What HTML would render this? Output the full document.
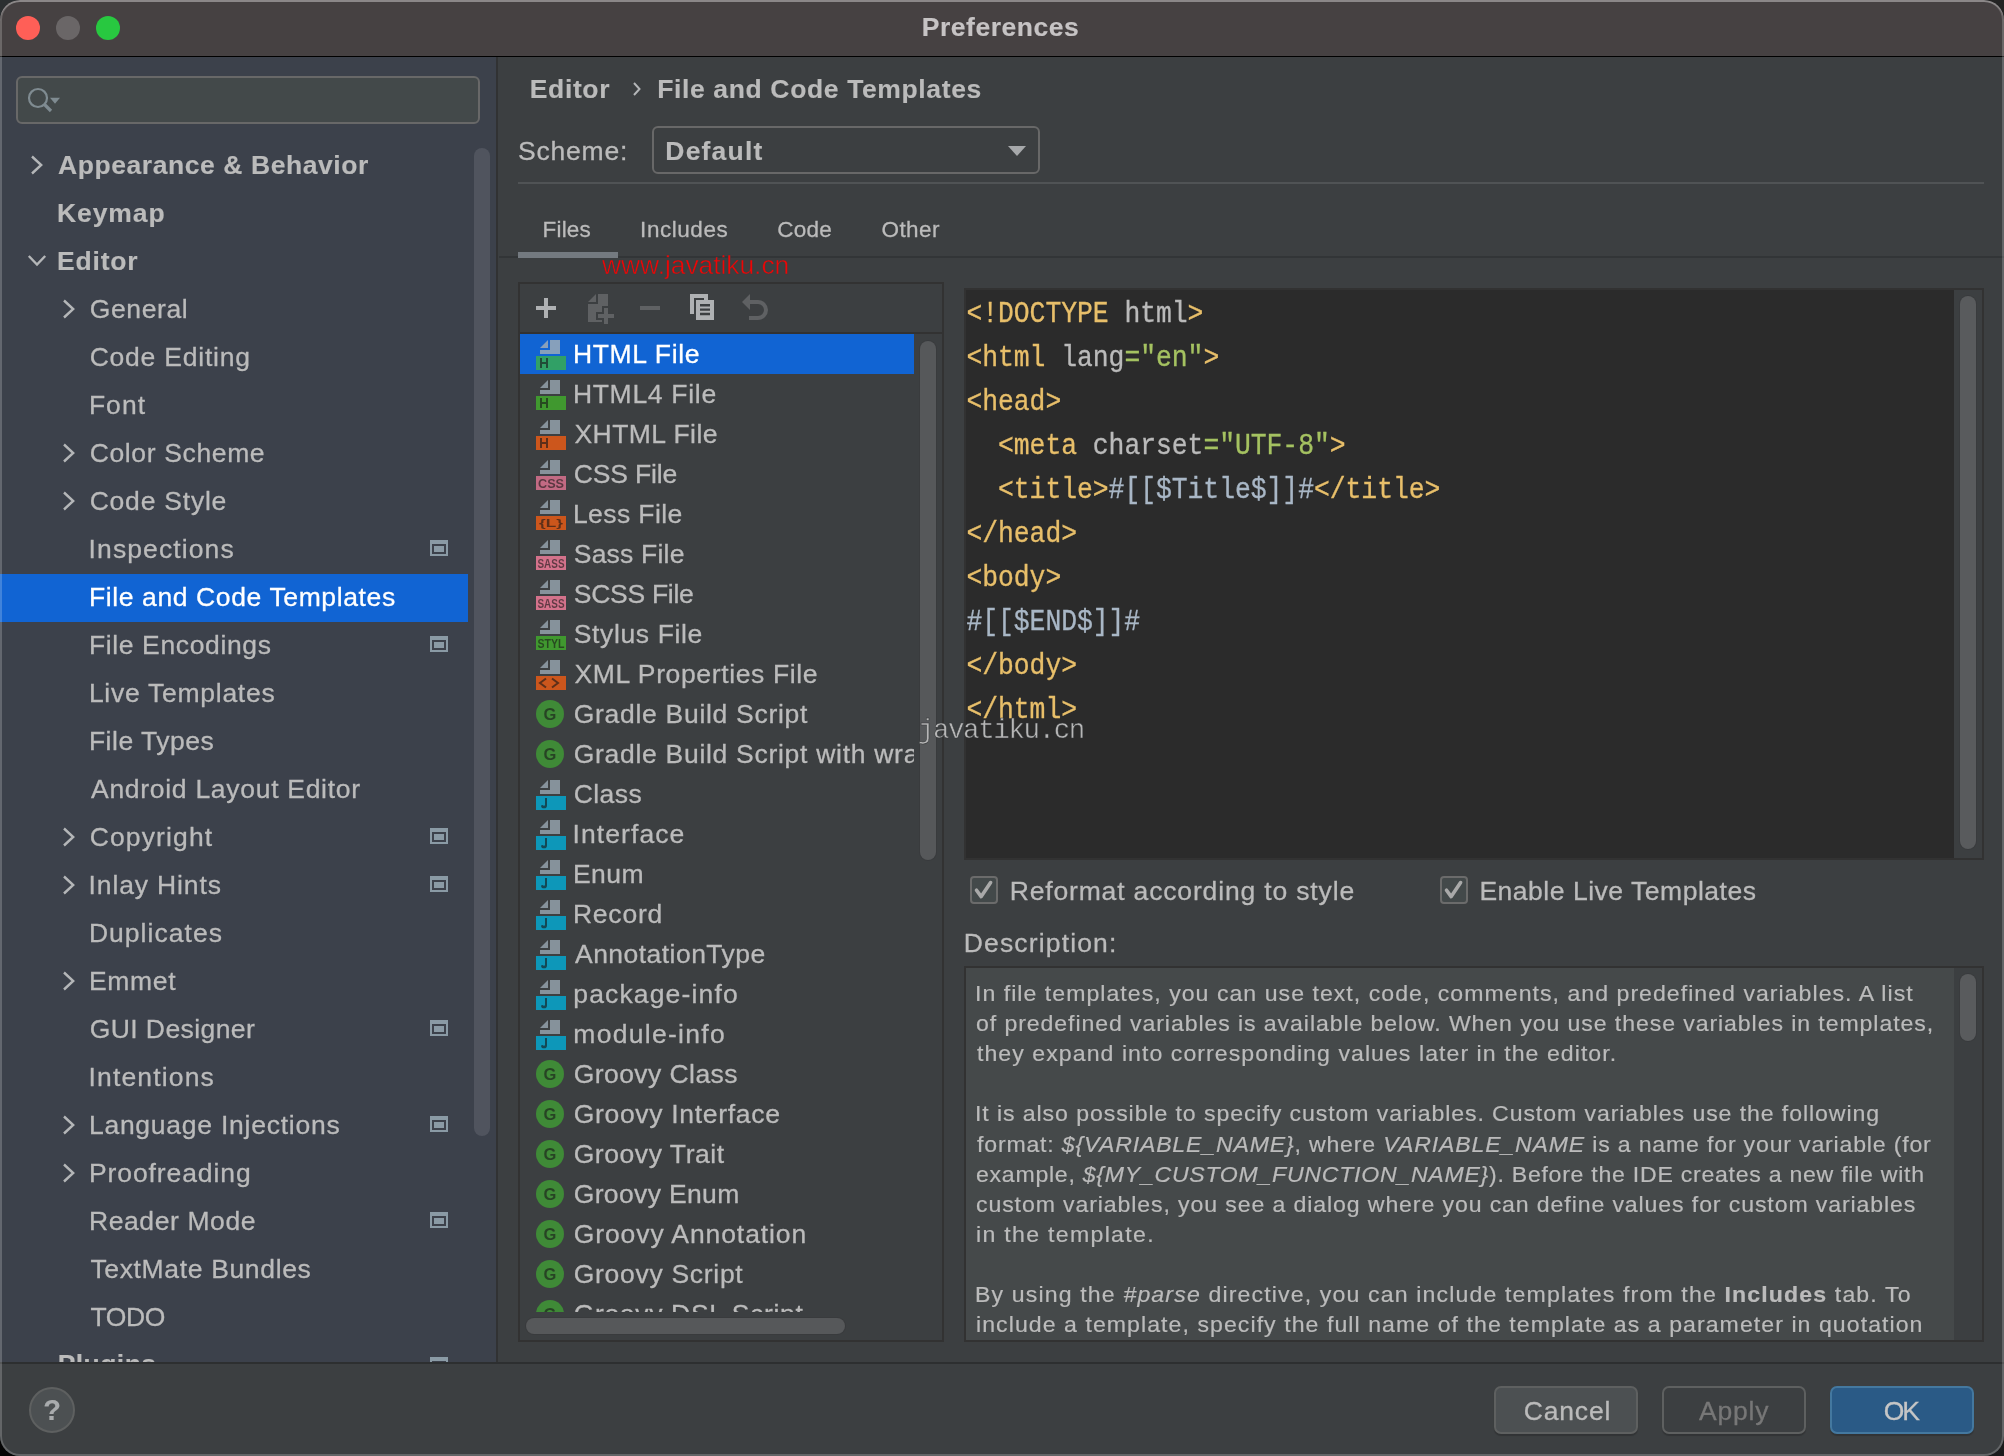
<!DOCTYPE html>
<html lang="en"><head><meta charset="utf-8"><title>Preferences</title>
<style>
html,body{margin:0;padding:0;background:#1b1b1c;width:2004px;height:1456px;overflow:hidden}
body{font-family:"Liberation Sans",sans-serif;}
#win{will-change:transform;position:absolute;left:0;top:0;width:2004px;height:1456px;border-radius:20px;overflow:hidden;background:#3c3f41}
#win:after{content:"";position:absolute;left:0;top:0;right:0;bottom:0;border-radius:20px;box-shadow:inset 0 0 0 2px rgba(255,255,255,.20), inset 0 2px 0 0 rgba(255,255,255,.22);pointer-events:none}
.r{position:absolute;display:block}
.t{position:absolute;white-space:nowrap;-webkit-text-stroke:0.3px currentColor}
</style></head>
<body>
<div class="r" style="left:0px;top:0px;width:30px;height:30px;background:#2b2f31;"></div>
<div class="r" style="left:1974px;top:0px;width:30px;height:30px;background:#232323;"></div>
<div class="r" style="left:0px;top:1426px;width:30px;height:30px;background:#050505;"></div>
<div class="r" style="left:1974px;top:1426px;width:30px;height:30px;background:#1b1b1c;"></div>
<div id="win">
<div class="r" style="left:0px;top:0px;width:2004px;height:56px;background:#464142;"></div>
<div class="r" style="left:0px;top:56px;width:2004px;height:1px;background:#000000;"></div>
<div class="r" style="left:16px;top:16px;width:24px;height:24px;background:#ff5f57;border-radius:50%;"></div>
<div class="r" style="left:56px;top:16px;width:24px;height:24px;background:#6a6667;border-radius:50%;"></div>
<div class="r" style="left:96px;top:16px;width:24px;height:24px;background:#28c840;border-radius:50%;"></div>
<div class="t" style="left:921.80px;top:5.60px;height:42px;line-height:42px;font-size:26.5px;color:#c6c3c4;letter-spacing:0.530px;font-family:'Liberation Sans',sans-serif;font-weight:bold;-webkit-text-stroke:0.15px currentColor;">Preferences</div>
<div class="r" style="left:0px;top:57px;width:496px;height:1306px;background:#3c414b;"></div>
<div class="r" style="left:496px;top:57px;width:2px;height:1306px;background:#313233;"></div>
<div class="r" style="left:16px;top:76px;width:464px;height:48px;box-sizing:border-box;border:2px solid #686868;border-radius:6px;background:#43494a"></div>
<svg class="r" style="left:24px;top:84px" width="44" height="32" viewBox="0 0 44 32"><circle cx="14" cy="14" r="9" fill="none" stroke="#7f8b91" stroke-width="2.2"/><path d="M20.5 20.5 L27 27" stroke="#7f8b91" stroke-width="3.2" fill="none"/><path d="M26 13.8 h10 l-5 6 z" fill="#7f8b91"/></svg>
<div class="r" style="left:474px;top:148px;width:16px;height:988px;background:#50545e;border-radius:8px;"></div>
<div class="t" style="left:58.00px;top:144.00px;height:42px;line-height:42px;font-size:26.5px;color:#bbbbbb;letter-spacing:0.570px;font-family:'Liberation Sans',sans-serif;font-weight:bold;-webkit-text-stroke:0.15px currentColor;">Appearance &amp; Behavior</div>
<svg class="r" style="left:29.5px;top:153px" width="14" height="22" viewBox="0 0 14 22"><path d="M2 3.5 L11.2 12 L2 20.5" fill="none" stroke="#b4b6b8" stroke-width="2.4"/></svg>
<div class="t" style="left:57.00px;top:192.00px;height:42px;line-height:42px;font-size:26.5px;color:#bbbbbb;letter-spacing:0.900px;font-family:'Liberation Sans',sans-serif;font-weight:bold;-webkit-text-stroke:0.15px currentColor;">Keymap</div>
<div class="t" style="left:57.00px;top:240.00px;height:42px;line-height:42px;font-size:26.5px;color:#bbbbbb;letter-spacing:0.820px;font-family:'Liberation Sans',sans-serif;font-weight:bold;-webkit-text-stroke:0.15px currentColor;">Editor</div>
<svg class="r" style="left:26px;top:253.6px" width="22" height="14" viewBox="0 0 22 14"><path d="M2.8 2 L11 10.6 L19.2 2" fill="none" stroke="#b4b6b8" stroke-width="2.4"/></svg>
<div class="t" style="left:89.70px;top:288.00px;height:42px;line-height:42px;font-size:26.5px;color:#bbbbbb;letter-spacing:0.633px;font-family:'Liberation Sans',sans-serif;">General</div>
<svg class="r" style="left:61.5px;top:297px" width="14" height="22" viewBox="0 0 14 22"><path d="M2 3.5 L11.2 12 L2 20.5" fill="none" stroke="#b4b6b8" stroke-width="2.4"/></svg>
<div class="t" style="left:89.70px;top:336.00px;height:42px;line-height:42px;font-size:26.5px;color:#bbbbbb;letter-spacing:0.773px;font-family:'Liberation Sans',sans-serif;">Code Editing</div>
<div class="t" style="left:88.90px;top:384.00px;height:42px;line-height:42px;font-size:26.5px;color:#bbbbbb;letter-spacing:1.033px;font-family:'Liberation Sans',sans-serif;">Font</div>
<div class="t" style="left:89.70px;top:432.00px;height:42px;line-height:42px;font-size:26.5px;color:#bbbbbb;letter-spacing:0.636px;font-family:'Liberation Sans',sans-serif;">Color Scheme</div>
<svg class="r" style="left:61.5px;top:441px" width="14" height="22" viewBox="0 0 14 22"><path d="M2 3.5 L11.2 12 L2 20.5" fill="none" stroke="#b4b6b8" stroke-width="2.4"/></svg>
<div class="t" style="left:89.70px;top:480.00px;height:42px;line-height:42px;font-size:26.5px;color:#bbbbbb;letter-spacing:0.778px;font-family:'Liberation Sans',sans-serif;">Code Style</div>
<svg class="r" style="left:61.5px;top:489px" width="14" height="22" viewBox="0 0 14 22"><path d="M2 3.5 L11.2 12 L2 20.5" fill="none" stroke="#b4b6b8" stroke-width="2.4"/></svg>
<div class="t" style="left:88.60px;top:528.00px;height:42px;line-height:42px;font-size:26.5px;color:#bbbbbb;letter-spacing:1.100px;font-family:'Liberation Sans',sans-serif;">Inspections</div>
<svg class="r" style="left:430px;top:540px" width="18" height="16" viewBox="0 0 18 16"><path d="M0 0h18v16H0z M2 4v10h14V4z" fill="#8a9aa5" fill-rule="evenodd"/><rect x="4" y="6" width="10" height="6" fill="#8a9aa5"/></svg>
<div class="r" style="left:0px;top:574px;width:468px;height:48px;background:#1164d3;"></div>
<div class="t" style="left:88.90px;top:576.00px;height:42px;line-height:42px;font-size:26.5px;color:#ffffff;letter-spacing:0.618px;font-family:'Liberation Sans',sans-serif;">File and Code Templates</div>
<div class="t" style="left:88.90px;top:624.00px;height:42px;line-height:42px;font-size:26.5px;color:#bbbbbb;letter-spacing:0.631px;font-family:'Liberation Sans',sans-serif;">File Encodings</div>
<svg class="r" style="left:430px;top:636px" width="18" height="16" viewBox="0 0 18 16"><path d="M0 0h18v16H0z M2 4v10h14V4z" fill="#8a9aa5" fill-rule="evenodd"/><rect x="4" y="6" width="10" height="6" fill="#8a9aa5"/></svg>
<div class="t" style="left:88.90px;top:672.00px;height:42px;line-height:42px;font-size:26.5px;color:#bbbbbb;letter-spacing:0.731px;font-family:'Liberation Sans',sans-serif;">Live Templates</div>
<div class="t" style="left:88.90px;top:720.00px;height:42px;line-height:42px;font-size:26.5px;color:#bbbbbb;letter-spacing:0.522px;font-family:'Liberation Sans',sans-serif;">File Types</div>
<div class="t" style="left:91.00px;top:768.00px;height:42px;line-height:42px;font-size:26.5px;color:#bbbbbb;letter-spacing:0.710px;font-family:'Liberation Sans',sans-serif;">Android Layout Editor</div>
<div class="t" style="left:89.70px;top:816.00px;height:42px;line-height:42px;font-size:26.5px;color:#bbbbbb;letter-spacing:1.137px;font-family:'Liberation Sans',sans-serif;">Copyright</div>
<svg class="r" style="left:61.5px;top:825px" width="14" height="22" viewBox="0 0 14 22"><path d="M2 3.5 L11.2 12 L2 20.5" fill="none" stroke="#b4b6b8" stroke-width="2.4"/></svg>
<svg class="r" style="left:430px;top:828px" width="18" height="16" viewBox="0 0 18 16"><path d="M0 0h18v16H0z M2 4v10h14V4z" fill="#8a9aa5" fill-rule="evenodd"/><rect x="4" y="6" width="10" height="6" fill="#8a9aa5"/></svg>
<div class="t" style="left:88.60px;top:864.00px;height:42px;line-height:42px;font-size:26.5px;color:#bbbbbb;letter-spacing:0.860px;font-family:'Liberation Sans',sans-serif;">Inlay Hints</div>
<svg class="r" style="left:61.5px;top:873px" width="14" height="22" viewBox="0 0 14 22"><path d="M2 3.5 L11.2 12 L2 20.5" fill="none" stroke="#b4b6b8" stroke-width="2.4"/></svg>
<svg class="r" style="left:430px;top:876px" width="18" height="16" viewBox="0 0 18 16"><path d="M0 0h18v16H0z M2 4v10h14V4z" fill="#8a9aa5" fill-rule="evenodd"/><rect x="4" y="6" width="10" height="6" fill="#8a9aa5"/></svg>
<div class="t" style="left:88.90px;top:912.00px;height:42px;line-height:42px;font-size:26.5px;color:#bbbbbb;letter-spacing:1.033px;font-family:'Liberation Sans',sans-serif;">Duplicates</div>
<div class="t" style="left:88.90px;top:960.00px;height:42px;line-height:42px;font-size:26.5px;color:#bbbbbb;letter-spacing:0.675px;font-family:'Liberation Sans',sans-serif;">Emmet</div>
<svg class="r" style="left:61.5px;top:969px" width="14" height="22" viewBox="0 0 14 22"><path d="M2 3.5 L11.2 12 L2 20.5" fill="none" stroke="#b4b6b8" stroke-width="2.4"/></svg>
<div class="t" style="left:89.70px;top:1008.00px;height:42px;line-height:42px;font-size:26.5px;color:#bbbbbb;letter-spacing:0.418px;font-family:'Liberation Sans',sans-serif;">GUI Designer</div>
<svg class="r" style="left:430px;top:1020px" width="18" height="16" viewBox="0 0 18 16"><path d="M0 0h18v16H0z M2 4v10h14V4z" fill="#8a9aa5" fill-rule="evenodd"/><rect x="4" y="6" width="10" height="6" fill="#8a9aa5"/></svg>
<div class="t" style="left:88.60px;top:1056.00px;height:42px;line-height:42px;font-size:26.5px;color:#bbbbbb;letter-spacing:1.144px;font-family:'Liberation Sans',sans-serif;">Intentions</div>
<div class="t" style="left:88.90px;top:1104.00px;height:42px;line-height:42px;font-size:26.5px;color:#bbbbbb;letter-spacing:0.756px;font-family:'Liberation Sans',sans-serif;">Language Injections</div>
<svg class="r" style="left:61.5px;top:1113px" width="14" height="22" viewBox="0 0 14 22"><path d="M2 3.5 L11.2 12 L2 20.5" fill="none" stroke="#b4b6b8" stroke-width="2.4"/></svg>
<svg class="r" style="left:430px;top:1116px" width="18" height="16" viewBox="0 0 18 16"><path d="M0 0h18v16H0z M2 4v10h14V4z" fill="#8a9aa5" fill-rule="evenodd"/><rect x="4" y="6" width="10" height="6" fill="#8a9aa5"/></svg>
<div class="t" style="left:88.90px;top:1152.00px;height:42px;line-height:42px;font-size:26.5px;color:#bbbbbb;letter-spacing:0.918px;font-family:'Liberation Sans',sans-serif;">Proofreading</div>
<svg class="r" style="left:61.5px;top:1161px" width="14" height="22" viewBox="0 0 14 22"><path d="M2 3.5 L11.2 12 L2 20.5" fill="none" stroke="#b4b6b8" stroke-width="2.4"/></svg>
<div class="t" style="left:88.90px;top:1200.00px;height:42px;line-height:42px;font-size:26.5px;color:#bbbbbb;letter-spacing:0.610px;font-family:'Liberation Sans',sans-serif;">Reader Mode</div>
<svg class="r" style="left:430px;top:1212px" width="18" height="16" viewBox="0 0 18 16"><path d="M0 0h18v16H0z M2 4v10h14V4z" fill="#8a9aa5" fill-rule="evenodd"/><rect x="4" y="6" width="10" height="6" fill="#8a9aa5"/></svg>
<div class="t" style="left:90.40px;top:1248.00px;height:42px;line-height:42px;font-size:26.5px;color:#bbbbbb;letter-spacing:0.653px;font-family:'Liberation Sans',sans-serif;">TextMate Bundles</div>
<div class="t" style="left:90.40px;top:1296.00px;height:42px;line-height:42px;font-size:26.5px;color:#bbbbbb;letter-spacing:-0.367px;font-family:'Liberation Sans',sans-serif;">TODO</div>
<div class="r" style="left:0;top:1340px;width:497px;height:22px;overflow:hidden">
<div class="t" style="left:57.70px;top:3.00px;height:42px;line-height:42px;font-size:26.5px;color:#bbbbbb;letter-spacing:0.433px;font-family:'Liberation Sans',sans-serif;font-weight:bold;-webkit-text-stroke:0.15px currentColor;">Plugins</div>
<svg class="r" style="left:430px;top:17px" width="18" height="16" viewBox="0 0 18 16"><path d="M0 0h18v16H0z M2 4v10h14V4z" fill="#8a9aa5" fill-rule="evenodd"/><rect x="4" y="6" width="10" height="6" fill="#8a9aa5"/></svg>
</div>
<div class="r" style="left:0px;top:1362px;width:2004px;height:94px;background:#3c3f41;"></div>
<div class="r" style="left:0px;top:1362px;width:2004px;height:2px;background:#2d2f30;"></div>
<div class="r" style="left:29px;top:1387px;width:46px;height:46px;box-sizing:border-box;border:2px solid #5e6060;border-radius:50%;background:#4c5052"></div>
<div class="t" style="left:43.20px;top:1387.00px;height:46px;line-height:46px;font-size:29px;color:#a9abad;letter-spacing:0.000px;font-family:'Liberation Sans',sans-serif;font-weight:bold;-webkit-text-stroke:0.15px currentColor;">?</div>
<div class="r" style="left:1494px;top:1386px;width:144px;height:48px;box-sizing:border-box;border:2px solid #5e6060;border-radius:7px;background:#4c5052;box-shadow:0 2px 1px rgba(0,0,0,.18)"></div>
<div class="t" style="left:1523.70px;top:1389.80px;height:42px;line-height:42px;font-size:26.5px;color:#bbbbbb;letter-spacing:0.840px;font-family:'Liberation Sans',sans-serif;">Cancel</div>
<div class="r" style="left:1662px;top:1386px;width:144px;height:48px;box-sizing:border-box;border:2px solid #5e6060;border-radius:7px;background:#3c3f41;box-shadow:0 2px 1px rgba(0,0,0,.18)"></div>
<div class="t" style="left:1699.00px;top:1389.80px;height:42px;line-height:42px;font-size:26.5px;color:#777777;letter-spacing:0.775px;font-family:'Liberation Sans',sans-serif;">Apply</div>
<div class="r" style="left:1830px;top:1386px;width:144px;height:48px;box-sizing:border-box;border:2px solid #44789f;border-radius:7px;background:#2a5a86;box-shadow:0 2px 1px rgba(0,0,0,.18)"></div>
<div class="t" style="left:1883.80px;top:1389.80px;height:42px;line-height:42px;font-size:26.5px;color:#c6c6c6;letter-spacing:-2.200px;font-family:'Liberation Sans',sans-serif;">OK</div>
<div class="r" style="left:498px;top:57px;width:1506px;height:1305px;background:#3c3f41;"></div>
<div class="t" style="left:529.80px;top:68.00px;height:42px;line-height:42px;font-size:26.5px;color:#bbbbbb;letter-spacing:0.620px;font-family:'Liberation Sans',sans-serif;font-weight:bold;-webkit-text-stroke:0.15px currentColor;">Editor</div>
<svg class="r" style="left:632px;top:81px" width="10" height="16" viewBox="0 0 10 16"><path d="M2 2 L7.5 8 L2 14" fill="none" stroke="#b4b6b8" stroke-width="2"/></svg>
<div class="t" style="left:657.20px;top:68.00px;height:42px;line-height:42px;font-size:26.5px;color:#bbbbbb;letter-spacing:0.632px;font-family:'Liberation Sans',sans-serif;font-weight:bold;-webkit-text-stroke:0.15px currentColor;">File and Code Templates</div>
<div class="t" style="left:518.00px;top:130.00px;height:42px;line-height:42px;font-size:26.5px;color:#bbbbbb;letter-spacing:0.800px;font-family:'Liberation Sans',sans-serif;">Scheme:</div>
<div class="r" style="left:652px;top:126px;width:388px;height:48px;box-sizing:border-box;border:2px solid #686868;border-radius:6px;background:#3c3f41"></div>
<div class="t" style="left:665.30px;top:129.50px;height:42px;line-height:42px;font-size:26.5px;color:#bbbbbb;letter-spacing:1.200px;font-family:'Liberation Sans',sans-serif;font-weight:bold;-webkit-text-stroke:0.15px currentColor;">Default</div>
<svg class="r" style="left:1007px;top:145px" width="20" height="12" viewBox="0 0 20 12"><path d="M1 1 h18 l-9 10 z" fill="#a6a8aa"/></svg>
<div class="r" style="left:518px;top:182px;width:1466px;height:2px;background:#505355;"></div>
<div class="t" style="left:542.60px;top:212.40px;height:36px;line-height:36px;font-size:22.5px;color:#bbbbbb;letter-spacing:0.175px;font-family:'Liberation Sans',sans-serif;">Files</div>
<div class="t" style="left:640.10px;top:212.40px;height:36px;line-height:36px;font-size:22.5px;color:#bbbbbb;letter-spacing:0.543px;font-family:'Liberation Sans',sans-serif;">Includes</div>
<div class="t" style="left:777.30px;top:212.40px;height:36px;line-height:36px;font-size:22.5px;color:#bbbbbb;letter-spacing:0.233px;font-family:'Liberation Sans',sans-serif;">Code</div>
<div class="t" style="left:881.50px;top:212.40px;height:36px;line-height:36px;font-size:22.5px;color:#bbbbbb;letter-spacing:0.400px;font-family:'Liberation Sans',sans-serif;">Other</div>
<div class="r" style="left:499px;top:256px;width:1505px;height:2px;background:#323537;"></div>
<div class="r" style="left:518px;top:252px;width:100px;height:6px;background:#747a80;"></div>
<div class="t" style="left:602.10px;top:244.00px;height:42px;line-height:42px;font-size:26.4px;color:#ee0505;letter-spacing:-0.043px;font-family:'Liberation Sans',sans-serif;-webkit-text-stroke:0.5px #3c3f41;">www.javatiku.cn</div>
<div class="r" style="left:518px;top:282px;width:426px;height:1060px;box-sizing:border-box;border:2px solid #323232;background:#3c3f41"></div>
<div class="r" style="left:520px;top:332px;width:422px;height:2px;background:#323232;"></div>
<svg class="r" style="left:532px;top:290px" width="250" height="38" viewBox="532 290 250 38"><path d="M544 298h4v8h8v4h-8v8h-4v-8h-8v-4h8z" fill="#afb1b3"/><path d="M596 294v8h-8z M598 294h10v28h-20v-18h10z" fill="#5f6163"/><path d="M604 308h4v6h6v4h-6v6h-4v-6h-6v-4h6z" fill="#5f6163" stroke="#3c3f41" stroke-width="4" paint-order="stroke"/><rect x="640" y="306" width="20" height="4" fill="#5f6163"/><path d="M690 294h18v6h-4v-2h-10v16h-4z" fill="#afb1b3"/><path d="M696 300h18v20h-18z M700 304v2.4h10V304z M700 308.4v2.4h10v-2.4z M700 312.8v2.4h10v-2.4z" fill="#afb1b3" fill-rule="evenodd"/><path d="M742 302 l8-8 v16z" fill="#5f6163"/><path d="M749 302 h9 a8 8 0 0 1 0 16 h-9" fill="none" stroke="#5f6163" stroke-width="4"/></svg>
<div class="r" style="left:520px;top:334px;width:394px;height:978px;overflow:hidden"><div class="r" style="left:-520px;top:-334px;width:2004px;height:1456px">
<div class="r" style="left:520px;top:334px;width:394px;height:40px;background:#1164d3;"></div>
<svg class="r" style="left:534px;top:338px" width="32" height="32" viewBox="0 0 32 32"><path d="M6 10h8V2z" fill="#87a0bb"/><path d="M16 2h10v14H6v-4h10z" fill="#87a0bb"/><rect x="2" y="18" width="30" height="14" fill="#31a066"/><path d="M6 20h2v4h4v-4h2v10h-2v-4H8v4H6z" fill="rgba(25,25,25,.62)"/></svg>
<div class="t" style="left:572.90px;top:333.00px;height:42px;line-height:42px;font-size:26.5px;color:#ffffff;letter-spacing:0.687px;font-family:'Liberation Sans',sans-serif;">HTML File</div>
<svg class="r" style="left:534px;top:378px" width="32" height="32" viewBox="0 0 32 32"><path d="M6 10h8V2z" fill="#86929b"/><path d="M16 2h10v14H6v-4h10z" fill="#86929b"/><rect x="2" y="18" width="30" height="14" fill="#40982f"/><path d="M6 20h2v4h4v-4h2v10h-2v-4H8v4H6z" fill="rgba(25,25,25,.62)"/></svg>
<div class="t" style="left:572.90px;top:373.00px;height:42px;line-height:42px;font-size:26.5px;color:#bbbbbb;letter-spacing:0.700px;font-family:'Liberation Sans',sans-serif;">HTML4 File</div>
<svg class="r" style="left:534px;top:418px" width="32" height="32" viewBox="0 0 32 32"><path d="M6 10h8V2z" fill="#86929b"/><path d="M16 2h10v14H6v-4h10z" fill="#86929b"/><rect x="2" y="18" width="30" height="14" fill="#cc561c"/><path d="M6 20h2v4h4v-4h2v10h-2v-4H8v4H6z" fill="rgba(25,25,25,.62)"/></svg>
<div class="t" style="left:574.40px;top:413.00px;height:42px;line-height:42px;font-size:26.5px;color:#bbbbbb;letter-spacing:0.467px;font-family:'Liberation Sans',sans-serif;">XHTML File</div>
<svg class="r" style="left:534px;top:458px" width="32" height="32" viewBox="0 0 32 32"><path d="M6 10h8V2z" fill="#86929b"/><path d="M16 2h10v14H6v-4h10z" fill="#86929b"/><rect x="2" y="18" width="30" height="14" fill="#c26a83"/><text x="17" y="29.6" font-family="Liberation Sans" font-weight="bold" font-size="12.5" text-anchor="middle" fill="rgba(25,25,25,.62)" textLength="26" lengthAdjust="spacingAndGlyphs">CSS</text></svg>
<div class="t" style="left:573.70px;top:453.00px;height:42px;line-height:42px;font-size:26.5px;color:#bbbbbb;letter-spacing:-0.157px;font-family:'Liberation Sans',sans-serif;">CSS File</div>
<svg class="r" style="left:534px;top:498px" width="32" height="32" viewBox="0 0 32 32"><path d="M6 10h8V2z" fill="#86929b"/><path d="M16 2h10v14H6v-4h10z" fill="#86929b"/><rect x="2" y="18" width="30" height="14" fill="#cc561c"/><text x="17" y="29.2" font-family="Liberation Sans" font-weight="bold" font-size="11" text-anchor="middle" fill="rgba(25,25,25,.62)" textLength="24" lengthAdjust="spacingAndGlyphs">{L}</text></svg>
<div class="t" style="left:572.90px;top:493.00px;height:42px;line-height:42px;font-size:26.5px;color:#bbbbbb;letter-spacing:0.425px;font-family:'Liberation Sans',sans-serif;">Less File</div>
<svg class="r" style="left:534px;top:538px" width="32" height="32" viewBox="0 0 32 32"><path d="M6 10h8V2z" fill="#86929b"/><path d="M16 2h10v14H6v-4h10z" fill="#86929b"/><rect x="2" y="18" width="30" height="14" fill="#d4728b"/><text x="17" y="29.6" font-family="Liberation Sans" font-weight="bold" font-size="12.5" text-anchor="middle" fill="rgba(25,25,25,.62)" textLength="27" lengthAdjust="spacingAndGlyphs">SASS</text></svg>
<div class="t" style="left:573.80px;top:533.00px;height:42px;line-height:42px;font-size:26.5px;color:#bbbbbb;letter-spacing:0.200px;font-family:'Liberation Sans',sans-serif;">Sass File</div>
<svg class="r" style="left:534px;top:578px" width="32" height="32" viewBox="0 0 32 32"><path d="M6 10h8V2z" fill="#86929b"/><path d="M16 2h10v14H6v-4h10z" fill="#86929b"/><rect x="2" y="18" width="30" height="14" fill="#d4728b"/><text x="17" y="29.6" font-family="Liberation Sans" font-weight="bold" font-size="12.5" text-anchor="middle" fill="rgba(25,25,25,.62)" textLength="27" lengthAdjust="spacingAndGlyphs">SASS</text></svg>
<div class="t" style="left:573.80px;top:573.00px;height:42px;line-height:42px;font-size:26.5px;color:#bbbbbb;letter-spacing:-0.275px;font-family:'Liberation Sans',sans-serif;">SCSS File</div>
<svg class="r" style="left:534px;top:618px" width="32" height="32" viewBox="0 0 32 32"><path d="M6 10h8V2z" fill="#86929b"/><path d="M16 2h10v14H6v-4h10z" fill="#86929b"/><rect x="2" y="18" width="30" height="14" fill="#40982f"/><text x="17" y="29.6" font-family="Liberation Sans" font-weight="bold" font-size="12.5" text-anchor="middle" fill="rgba(25,25,25,.62)" textLength="27" lengthAdjust="spacingAndGlyphs">STYL</text></svg>
<div class="t" style="left:573.80px;top:613.00px;height:42px;line-height:42px;font-size:26.5px;color:#bbbbbb;letter-spacing:0.620px;font-family:'Liberation Sans',sans-serif;">Stylus File</div>
<svg class="r" style="left:534px;top:658px" width="32" height="32" viewBox="0 0 32 32"><path d="M6 10h8V2z" fill="#86929b"/><path d="M16 2h10v14H6v-4h10z" fill="#86929b"/><rect x="2" y="18" width="30" height="14" fill="#cc561c"/><path d="M12 20.5 L6 25 L12 29.5 M18 20.5 L24 25 L18 29.5" fill="none" stroke="rgba(25,25,25,.62)" stroke-width="2"/></svg>
<div class="t" style="left:574.40px;top:653.00px;height:42px;line-height:42px;font-size:26.5px;color:#bbbbbb;letter-spacing:0.639px;font-family:'Liberation Sans',sans-serif;">XML Properties File</div>
<svg class="r" style="left:536px;top:700px" width="28" height="28" viewBox="0 0 28 28"><circle cx="14" cy="14" r="14" fill="#3f8a37"/><text x="14" y="19.8" font-family="Liberation Sans" font-weight="bold" font-size="16.5" text-anchor="middle" fill="rgba(25,25,25,.62)">G</text></svg>
<div class="t" style="left:573.70px;top:693.00px;height:42px;line-height:42px;font-size:26.5px;color:#bbbbbb;letter-spacing:0.711px;font-family:'Liberation Sans',sans-serif;">Gradle Build Script</div>
<svg class="r" style="left:536px;top:740px" width="28" height="28" viewBox="0 0 28 28"><circle cx="14" cy="14" r="14" fill="#3f8a37"/><text x="14" y="19.8" font-family="Liberation Sans" font-weight="bold" font-size="16.5" text-anchor="middle" fill="rgba(25,25,25,.62)">G</text></svg>
<div class="t" style="left:573.70px;top:733.00px;height:42px;line-height:42px;font-size:26.5px;color:#bbbbbb;letter-spacing:0.000px;font-family:'Liberation Sans',sans-serif;letter-spacing:0.711px;white-space:nowrap;">Gradle Build Script with wrapper</div>
<svg class="r" style="left:534px;top:778px" width="32" height="32" viewBox="0 0 32 32"><path d="M6 10h8V2z" fill="#86929b"/><path d="M16 2h10v14H6v-4h10z" fill="#86929b"/><rect x="2" y="18" width="30" height="14" fill="#0d97b9"/><path d="M11 20h2v7.2a3 3 0 0 1-6 .3l1.9-.4a1.1 1.1 0 0 0 2.1-.2z" fill="rgba(25,25,25,.62)"/></svg>
<div class="t" style="left:573.70px;top:773.00px;height:42px;line-height:42px;font-size:26.5px;color:#bbbbbb;letter-spacing:0.450px;font-family:'Liberation Sans',sans-serif;">Class</div>
<svg class="r" style="left:534px;top:818px" width="32" height="32" viewBox="0 0 32 32"><path d="M6 10h8V2z" fill="#86929b"/><path d="M16 2h10v14H6v-4h10z" fill="#86929b"/><rect x="2" y="18" width="30" height="14" fill="#0d97b9"/><path d="M11 20h2v7.2a3 3 0 0 1-6 .3l1.9-.4a1.1 1.1 0 0 0 2.1-.2z" fill="rgba(25,25,25,.62)"/></svg>
<div class="t" style="left:572.60px;top:813.00px;height:42px;line-height:42px;font-size:26.5px;color:#bbbbbb;letter-spacing:1.075px;font-family:'Liberation Sans',sans-serif;">Interface</div>
<svg class="r" style="left:534px;top:858px" width="32" height="32" viewBox="0 0 32 32"><path d="M6 10h8V2z" fill="#86929b"/><path d="M16 2h10v14H6v-4h10z" fill="#86929b"/><rect x="2" y="18" width="30" height="14" fill="#0d97b9"/><path d="M11 20h2v7.2a3 3 0 0 1-6 .3l1.9-.4a1.1 1.1 0 0 0 2.1-.2z" fill="rgba(25,25,25,.62)"/></svg>
<div class="t" style="left:572.90px;top:853.00px;height:42px;line-height:42px;font-size:26.5px;color:#bbbbbb;letter-spacing:0.500px;font-family:'Liberation Sans',sans-serif;">Enum</div>
<svg class="r" style="left:534px;top:898px" width="32" height="32" viewBox="0 0 32 32"><path d="M6 10h8V2z" fill="#86929b"/><path d="M16 2h10v14H6v-4h10z" fill="#86929b"/><rect x="2" y="18" width="30" height="14" fill="#0d97b9"/><path d="M11 20h2v7.2a3 3 0 0 1-6 .3l1.9-.4a1.1 1.1 0 0 0 2.1-.2z" fill="rgba(25,25,25,.62)"/></svg>
<div class="t" style="left:572.90px;top:893.00px;height:42px;line-height:42px;font-size:26.5px;color:#bbbbbb;letter-spacing:0.800px;font-family:'Liberation Sans',sans-serif;">Record</div>
<svg class="r" style="left:534px;top:938px" width="32" height="32" viewBox="0 0 32 32"><path d="M6 10h8V2z" fill="#86929b"/><path d="M16 2h10v14H6v-4h10z" fill="#86929b"/><rect x="2" y="18" width="30" height="14" fill="#0d97b9"/><path d="M11 20h2v7.2a3 3 0 0 1-6 .3l1.9-.4a1.1 1.1 0 0 0 2.1-.2z" fill="rgba(25,25,25,.62)"/></svg>
<div class="t" style="left:575.00px;top:933.00px;height:42px;line-height:42px;font-size:26.5px;color:#bbbbbb;letter-spacing:0.462px;font-family:'Liberation Sans',sans-serif;">AnnotationType</div>
<svg class="r" style="left:534px;top:978px" width="32" height="32" viewBox="0 0 32 32"><path d="M6 10h8V2z" fill="#86929b"/><path d="M16 2h10v14H6v-4h10z" fill="#86929b"/><rect x="2" y="18" width="30" height="14" fill="#0d97b9"/><path d="M11 20h2v7.2a3 3 0 0 1-6 .3l1.9-.4a1.1 1.1 0 0 0 2.1-.2z" fill="rgba(25,25,25,.62)"/></svg>
<div class="t" style="left:573.30px;top:973.00px;height:42px;line-height:42px;font-size:26.5px;color:#bbbbbb;letter-spacing:1.145px;font-family:'Liberation Sans',sans-serif;">package-info</div>
<svg class="r" style="left:534px;top:1018px" width="32" height="32" viewBox="0 0 32 32"><path d="M6 10h8V2z" fill="#86929b"/><path d="M16 2h10v14H6v-4h10z" fill="#86929b"/><rect x="2" y="18" width="30" height="14" fill="#0d97b9"/><path d="M11 20h2v7.2a3 3 0 0 1-6 .3l1.9-.4a1.1 1.1 0 0 0 2.1-.2z" fill="rgba(25,25,25,.62)"/></svg>
<div class="t" style="left:573.30px;top:1013.00px;height:42px;line-height:42px;font-size:26.5px;color:#bbbbbb;letter-spacing:1.290px;font-family:'Liberation Sans',sans-serif;">module-info</div>
<svg class="r" style="left:536px;top:1060px" width="28" height="28" viewBox="0 0 28 28"><circle cx="14" cy="14" r="14" fill="#3f8a37"/><text x="14" y="19.8" font-family="Liberation Sans" font-weight="bold" font-size="16.5" text-anchor="middle" fill="rgba(25,25,25,.62)">G</text></svg>
<div class="t" style="left:573.70px;top:1053.00px;height:42px;line-height:42px;font-size:26.5px;color:#bbbbbb;letter-spacing:0.436px;font-family:'Liberation Sans',sans-serif;">Groovy Class</div>
<svg class="r" style="left:536px;top:1100px" width="28" height="28" viewBox="0 0 28 28"><circle cx="14" cy="14" r="14" fill="#3f8a37"/><text x="14" y="19.8" font-family="Liberation Sans" font-weight="bold" font-size="16.5" text-anchor="middle" fill="rgba(25,25,25,.62)">G</text></svg>
<div class="t" style="left:573.70px;top:1093.00px;height:42px;line-height:42px;font-size:26.5px;color:#bbbbbb;letter-spacing:0.693px;font-family:'Liberation Sans',sans-serif;">Groovy Interface</div>
<svg class="r" style="left:536px;top:1140px" width="28" height="28" viewBox="0 0 28 28"><circle cx="14" cy="14" r="14" fill="#3f8a37"/><text x="14" y="19.8" font-family="Liberation Sans" font-weight="bold" font-size="16.5" text-anchor="middle" fill="rgba(25,25,25,.62)">G</text></svg>
<div class="t" style="left:573.70px;top:1133.00px;height:42px;line-height:42px;font-size:26.5px;color:#bbbbbb;letter-spacing:0.555px;font-family:'Liberation Sans',sans-serif;">Groovy Trait</div>
<svg class="r" style="left:536px;top:1180px" width="28" height="28" viewBox="0 0 28 28"><circle cx="14" cy="14" r="14" fill="#3f8a37"/><text x="14" y="19.8" font-family="Liberation Sans" font-weight="bold" font-size="16.5" text-anchor="middle" fill="rgba(25,25,25,.62)">G</text></svg>
<div class="t" style="left:573.70px;top:1173.00px;height:42px;line-height:42px;font-size:26.5px;color:#bbbbbb;letter-spacing:0.360px;font-family:'Liberation Sans',sans-serif;">Groovy Enum</div>
<svg class="r" style="left:536px;top:1220px" width="28" height="28" viewBox="0 0 28 28"><circle cx="14" cy="14" r="14" fill="#3f8a37"/><text x="14" y="19.8" font-family="Liberation Sans" font-weight="bold" font-size="16.5" text-anchor="middle" fill="rgba(25,25,25,.62)">G</text></svg>
<div class="t" style="left:573.70px;top:1213.00px;height:42px;line-height:42px;font-size:26.5px;color:#bbbbbb;letter-spacing:0.906px;font-family:'Liberation Sans',sans-serif;">Groovy Annotation</div>
<svg class="r" style="left:536px;top:1260px" width="28" height="28" viewBox="0 0 28 28"><circle cx="14" cy="14" r="14" fill="#3f8a37"/><text x="14" y="19.8" font-family="Liberation Sans" font-weight="bold" font-size="16.5" text-anchor="middle" fill="rgba(25,25,25,.62)">G</text></svg>
<div class="t" style="left:573.70px;top:1253.00px;height:42px;line-height:42px;font-size:26.5px;color:#bbbbbb;letter-spacing:0.708px;font-family:'Liberation Sans',sans-serif;">Groovy Script</div>
<svg class="r" style="left:536px;top:1300px" width="28" height="28" viewBox="0 0 28 28"><circle cx="14" cy="14" r="14" fill="#3f8a37"/><text x="14" y="19.8" font-family="Liberation Sans" font-weight="bold" font-size="16.5" text-anchor="middle" fill="rgba(25,25,25,.62)">G</text></svg>
<div class="t" style="left:573.70px;top:1293.00px;height:42px;line-height:42px;font-size:26.5px;color:#bbbbbb;letter-spacing:0.663px;font-family:'Liberation Sans',sans-serif;">Groovy DSL Script</div>
</div></div>
<div class="r" style="left:920px;top:341px;width:16px;height:519px;background:#56585a;border-radius:8px;box-shadow:0 0 0 1px #393b3d;"></div>
<div class="r" style="left:520px;top:1312px;width:422px;height:28px;background:#3c3f41;"></div>
<div class="r" style="left:526px;top:1318px;width:319px;height:16px;background:#56585a;border-radius:8px;box-shadow:0 0 0 1px #393b3d;"></div>
<div class="r" style="left:964px;top:288px;width:1020px;height:572px;box-sizing:border-box;border:2px solid #323232;background:#2b2b2b"></div>
<div class="r" style="left:1954px;top:290px;width:28px;height:568px;background:#3c3f41;"></div>
<div class="r" style="left:1960px;top:296px;width:16px;height:553px;background:#595b5d;border-radius:8px;box-shadow:0 0 0 1px #393b3d;"></div>
<div class="t" style="left:966.4px;top:293px;height:44px;line-height:44px;font-family:'Liberation Mono',monospace;font-size:26.4px;letter-spacing:-0.040px;white-space:pre;transform:scaleY(1.13);transform-origin:0 58%;"><span style="color:#e8bf6a">&lt;!DOCTYPE </span><span style="color:#bababa">html</span><span style="color:#e8bf6a">&gt;</span></div>
<div class="t" style="left:966.4px;top:337px;height:44px;line-height:44px;font-family:'Liberation Mono',monospace;font-size:26.4px;letter-spacing:-0.040px;white-space:pre;transform:scaleY(1.13);transform-origin:0 58%;"><span style="color:#e8bf6a">&lt;html </span><span style="color:#bababa">lang</span><span style="color:#a5c261">="en"</span><span style="color:#e8bf6a">&gt;</span></div>
<div class="t" style="left:966.4px;top:381px;height:44px;line-height:44px;font-family:'Liberation Mono',monospace;font-size:26.4px;letter-spacing:-0.040px;white-space:pre;transform:scaleY(1.13);transform-origin:0 58%;"><span style="color:#e8bf6a">&lt;head&gt;</span></div>
<div class="t" style="left:966.4px;top:425px;height:44px;line-height:44px;font-family:'Liberation Mono',monospace;font-size:26.4px;letter-spacing:-0.040px;white-space:pre;transform:scaleY(1.13);transform-origin:0 58%;"><span style="color:#e8bf6a">  &lt;meta </span><span style="color:#bababa">charset</span><span style="color:#a5c261">="UTF-8"</span><span style="color:#e8bf6a">&gt;</span></div>
<div class="t" style="left:966.4px;top:469px;height:44px;line-height:44px;font-family:'Liberation Mono',monospace;font-size:26.4px;letter-spacing:-0.040px;white-space:pre;transform:scaleY(1.13);transform-origin:0 58%;"><span style="color:#e8bf6a">  &lt;title&gt;</span><span style="color:#a9b7c6">#[[$Title$]]#</span><span style="color:#e8bf6a">&lt;/title&gt;</span></div>
<div class="t" style="left:966.4px;top:513px;height:44px;line-height:44px;font-family:'Liberation Mono',monospace;font-size:26.4px;letter-spacing:-0.040px;white-space:pre;transform:scaleY(1.13);transform-origin:0 58%;"><span style="color:#e8bf6a">&lt;/head&gt;</span></div>
<div class="t" style="left:966.4px;top:557px;height:44px;line-height:44px;font-family:'Liberation Mono',monospace;font-size:26.4px;letter-spacing:-0.040px;white-space:pre;transform:scaleY(1.13);transform-origin:0 58%;"><span style="color:#e8bf6a">&lt;body&gt;</span></div>
<div class="t" style="left:966.4px;top:601px;height:44px;line-height:44px;font-family:'Liberation Mono',monospace;font-size:26.4px;letter-spacing:-0.040px;white-space:pre;transform:scaleY(1.13);transform-origin:0 58%;"><span style="color:#a9b7c6">#[[$END$]]#</span></div>
<div class="t" style="left:966.4px;top:645px;height:44px;line-height:44px;font-family:'Liberation Mono',monospace;font-size:26.4px;letter-spacing:-0.040px;white-space:pre;transform:scaleY(1.13);transform-origin:0 58%;"><span style="color:#e8bf6a">&lt;/body&gt;</span></div>
<div class="t" style="left:966.4px;top:689px;height:44px;line-height:44px;font-family:'Liberation Mono',monospace;font-size:26.4px;letter-spacing:-0.040px;white-space:pre;transform:scaleY(1.13);transform-origin:0 58%;"><span style="color:#e8bf6a">&lt;/html&gt;</span></div>
<div class="t" style="left:917.8px;top:709px;height:44px;line-height:44px;font-family:'Liberation Mono',monospace;font-size:27.5px;letter-spacing:-1.4px;color:#b6b6b6;white-space:pre;-webkit-text-stroke:0.5px #333638;">javatiku.cn</div>
<div class="r" style="left:970px;top:876px;width:28px;height:28px;box-sizing:border-box;border:2px solid #6b6b6b;border-radius:4px;background:#43494a"></div>
<svg class="r" style="left:970px;top:876px" width="28" height="28" viewBox="0 0 28 28"><path d="M6.5 14.2 L11.2 20.6 L20.6 6.6" fill="none" stroke="#a9a9a9" stroke-width="3.6" stroke-linecap="round" stroke-linejoin="round"/></svg>
<div class="t" style="left:1009.70px;top:870.00px;height:42px;line-height:42px;font-size:26.5px;color:#bbbbbb;letter-spacing:0.842px;font-family:'Liberation Sans',sans-serif;">Reformat according to style</div>
<div class="r" style="left:1440px;top:876px;width:28px;height:28px;box-sizing:border-box;border:2px solid #6b6b6b;border-radius:4px;background:#43494a"></div>
<svg class="r" style="left:1440px;top:876px" width="28" height="28" viewBox="0 0 28 28"><path d="M6.5 14.2 L11.2 20.6 L20.6 6.6" fill="none" stroke="#a9a9a9" stroke-width="3.6" stroke-linecap="round" stroke-linejoin="round"/></svg>
<div class="t" style="left:1479.40px;top:870.00px;height:42px;line-height:42px;font-size:26.5px;color:#bbbbbb;letter-spacing:0.520px;font-family:'Liberation Sans',sans-serif;">Enable Live Templates</div>
<div class="t" style="left:963.80px;top:921.70px;height:42px;line-height:42px;font-size:26.5px;color:#bbbbbb;letter-spacing:1.145px;font-family:'Liberation Sans',sans-serif;">Description:</div>
<div class="r" style="left:964px;top:966px;width:1020px;height:376px;box-sizing:border-box;border:2px solid #323232;background:#45494a"></div>
<div class="r" style="left:1954px;top:968px;width:28px;height:372px;background:#3c3f41;"></div>
<div class="r" style="left:1960px;top:974px;width:16px;height:67px;background:#595b5d;border-radius:8px;box-shadow:0 0 0 1px #393b3d;"></div>
<div class="r" style="left:966px;top:968px;width:988px;height:372px;overflow:hidden"><div class="r" style="left:-966px;top:-968px;width:2004px;height:1456px">
<div class="t" style="left:975.13px;top:979px;height:30px;line-height:30px;font-size:21.2px;letter-spacing:0.945px;color:#bbbbbb;white-space:pre;transform:scaleX(1.09);transform-origin:0 0;-webkit-text-stroke:0.2px currentColor">In file templates, you can use text, code, comments, and predefined variables. A list</div>
<div class="t" style="left:976.22px;top:1009.0999999999999px;height:30px;line-height:30px;font-size:21.2px;letter-spacing:0.839px;color:#bbbbbb;white-space:pre;transform:scaleX(1.09);transform-origin:0 0;-webkit-text-stroke:0.2px currentColor">of predefined variables is available below. When you use these variables in templates,</div>
<div class="t" style="left:976.87px;top:1039.2px;height:30px;line-height:30px;font-size:21.2px;letter-spacing:0.968px;color:#bbbbbb;white-space:pre;transform:scaleX(1.09);transform-origin:0 0;-webkit-text-stroke:0.2px currentColor">they expand into corresponding values later in the editor.</div>
<div class="t" style="left:975.13px;top:1099.4px;height:30px;line-height:30px;font-size:21.2px;letter-spacing:0.837px;color:#bbbbbb;white-space:pre;transform:scaleX(1.09);transform-origin:0 0;-webkit-text-stroke:0.2px currentColor">It is also possible to specify custom variables. Custom variables use the following</div>
<div class="t" style="left:976.87px;top:1129.5px;height:30px;line-height:30px;font-size:21.2px;letter-spacing:0.750px;color:#bbbbbb;white-space:pre;transform:scaleX(1.09);transform-origin:0 0;-webkit-text-stroke:0.2px currentColor">format: <i>${VARIABLE_NAME}</i>, where <i>VARIABLE_NAME</i> is a name for your variable (for</div>
<div class="t" style="left:976.22px;top:1159.6px;height:30px;line-height:30px;font-size:21.2px;letter-spacing:0.675px;color:#bbbbbb;white-space:pre;transform:scaleX(1.09);transform-origin:0 0;-webkit-text-stroke:0.2px currentColor">example, <i>${MY_CUSTOM_FUNCTION_NAME}</i>). Before the IDE creates a new file with</div>
<div class="t" style="left:976.22px;top:1189.7px;height:30px;line-height:30px;font-size:21.2px;letter-spacing:0.815px;color:#bbbbbb;white-space:pre;transform:scaleX(1.09);transform-origin:0 0;-webkit-text-stroke:0.2px currentColor">custom variables, you see a dialog where you can define values for custom variables</div>
<div class="t" style="left:975.67px;top:1219.8px;height:30px;line-height:30px;font-size:21.2px;letter-spacing:1.202px;color:#bbbbbb;white-space:pre;transform:scaleX(1.09);transform-origin:0 0;-webkit-text-stroke:0.2px currentColor">in the template.</div>
<div class="t" style="left:975.35px;top:1280px;height:30px;line-height:30px;font-size:21.2px;letter-spacing:1.049px;color:#bbbbbb;white-space:pre;transform:scaleX(1.09);transform-origin:0 0;-webkit-text-stroke:0.2px currentColor">By using the <i>#parse</i> directive, you can include templates from the <b>Includes</b> tab. To</div>
<div class="t" style="left:975.67px;top:1310.1px;height:30px;line-height:30px;font-size:21.2px;letter-spacing:0.971px;color:#bbbbbb;white-space:pre;transform:scaleX(1.09);transform-origin:0 0;-webkit-text-stroke:0.2px currentColor">include a template, specify the full name of the template as a parameter in quotation</div>
</div></div>
</div>
</body></html>
